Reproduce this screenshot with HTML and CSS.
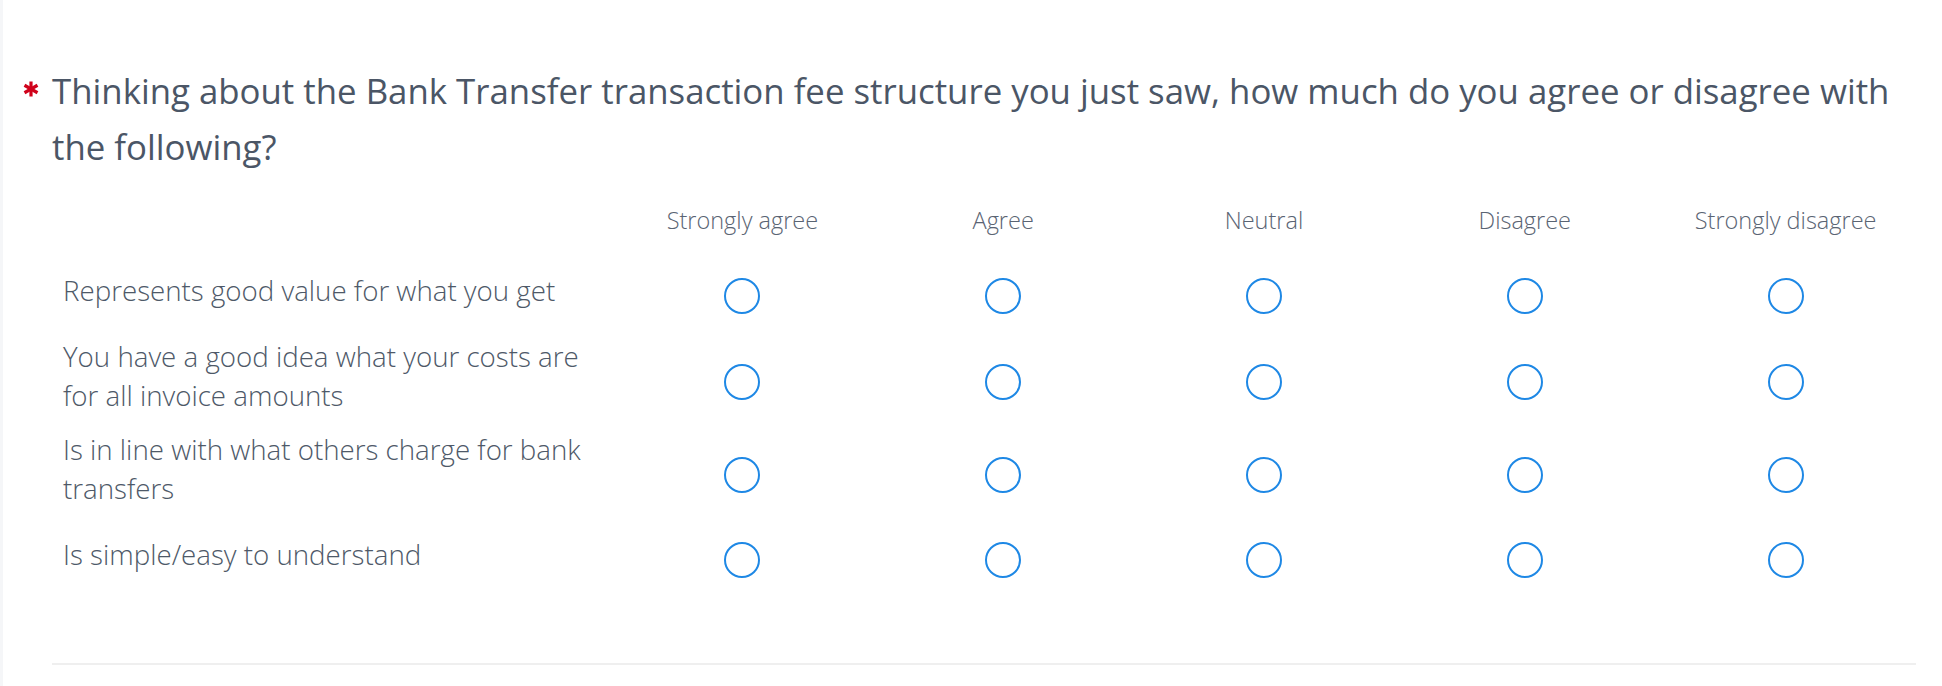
FILE: index.html
```html
<!DOCTYPE html>
<html>
<head>
<meta charset="utf-8">
<link rel="stylesheet" href="styles.css">
</head>
<body>
<div class="page">
  <div class="question">
    <span class="req" aria-hidden="true">
      <svg viewBox="0 0 16 16" width="16" height="16">
        <g stroke="#d0021b" stroke-width="3.2" stroke-linecap="butt">
          <line x1="8" y1="0.5" x2="8" y2="15.5"/>
          <line x1="1.5" y1="4.25" x2="14.5" y2="11.75"/>
          <line x1="1.5" y1="11.75" x2="14.5" y2="4.25"/>
        </g>
      </svg>
    </span>
    Thinking about the Bank Transfer transaction fee structure you just saw, how much do you agree or disagree with the following?
  </div>

  <div class="matrix">
    <div class="mrow head">
      <div class="label"></div>
      <div class="col">Strongly agree</div>
      <div class="col">Agree</div>
      <div class="col">Neutral</div>
      <div class="col">Disagree</div>
      <div class="col">Strongly disagree</div>
    </div>
    <div class="mrow">
      <div class="label">Represents good value for what you get</div>
      <div class="cell"><span class="radio"></span></div>
      <div class="cell"><span class="radio"></span></div>
      <div class="cell"><span class="radio"></span></div>
      <div class="cell"><span class="radio"></span></div>
      <div class="cell"><span class="radio"></span></div>
    </div>
    <div class="mrow">
      <div class="label">You have a good idea what your costs are for all invoice amounts</div>
      <div class="cell"><span class="radio"></span></div>
      <div class="cell"><span class="radio"></span></div>
      <div class="cell"><span class="radio"></span></div>
      <div class="cell"><span class="radio"></span></div>
      <div class="cell"><span class="radio"></span></div>
    </div>
    <div class="mrow">
      <div class="label">Is in line with what others charge for bank transfers</div>
      <div class="cell"><span class="radio"></span></div>
      <div class="cell"><span class="radio"></span></div>
      <div class="cell"><span class="radio"></span></div>
      <div class="cell"><span class="radio"></span></div>
      <div class="cell"><span class="radio"></span></div>
    </div>
    <div class="mrow">
      <div class="label">Is simple/easy to understand</div>
      <div class="cell"><span class="radio"></span></div>
      <div class="cell"><span class="radio"></span></div>
      <div class="cell"><span class="radio"></span></div>
      <div class="cell"><span class="radio"></span></div>
      <div class="cell"><span class="radio"></span></div>
    </div>
  </div>

  <div class="divider"></div>
</div>
</body>
</html>
```
FILE: styles.css
```css
html, body {
  margin: 0;
  padding: 0;
  background: #ffffff;
}

.page {
  box-sizing: border-box;
  min-height: 686px;
  border-left: 3px solid #f5f6f8;
  padding: 63px 26px 0 49px;
  font-family: "Open Sans", "Noto Sans", sans-serif;
}

.question {
  position: relative;
  font-size: 34.8px;
  line-height: 56px;
  font-weight: 400;
  color: #4b5666;
}

.req {
  position: absolute;
  left: -29px;
  top: 18px;
  width: 16px;
  height: 16px;
  line-height: 0;
}

.matrix {
  margin-top: 12px;
}

.mrow {
  display: grid;
  grid-template-columns: 560px repeat(5, 1fr);
  align-items: center;
  min-height: 78px;
}

.mrow.head {
  min-height: 70px;
}

.col {
  text-align: center;
  font-size: 23.5px;
  font-weight: 300;
  line-height: 32px;
  padding-bottom: 5px;
  color: #5a6473;
}

.label {
  box-sizing: border-box;
  padding: 2px 15px 13px 11px;
  font-size: 27.7px;
  font-weight: 300;
  line-height: 39px;
  color: #4e5968;
}

.cell {
  display: flex;
  justify-content: center;
  align-items: center;
}

.radio {
  box-sizing: border-box;
  width: 36px;
  height: 36px;
  border: 2px solid #1e88e5;
  border-radius: 50%;
  background: #ffffff;
}

.divider {
  margin-top: 64px;
  height: 2px;
  background: #efefef;
}
```
